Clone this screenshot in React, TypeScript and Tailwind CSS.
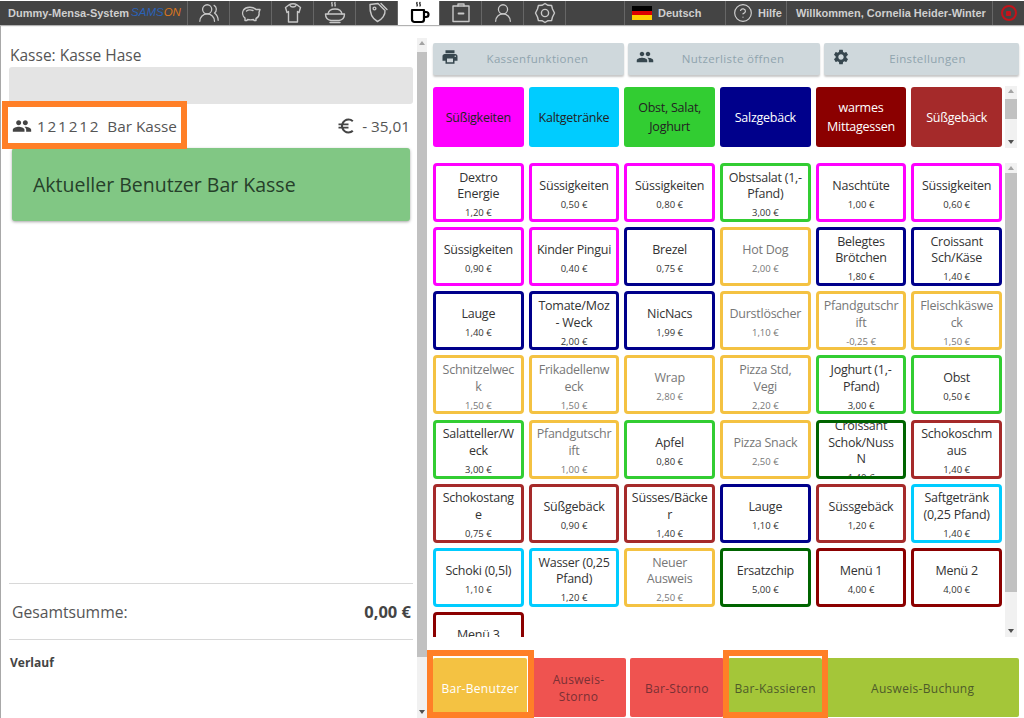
import { MdPeople, MdPrint, MdSettings, MdEuroSymbol } from "react-icons/md"
import { UserRound, UsersRound, CircleHelp } from "lucide-react"
import type { ReactNode } from "react"

const magenta = "border-[#ff00ff] text-[#333]"
const navy = "border-[#00008b] text-[#333]"
const lime = "border-[#32cd32] text-[#333]"
const amber = "border-[#f4c242] text-[#777]"
const forest = "border-[#006400] text-[#333]"
const brown = "border-[#a52a2a] text-[#333]"
const cyan = "border-[#00ccff] text-[#333]"
const maroon = "border-[#8b0000] text-[#333]"

const products: [string, string, string][] = [
  ["Dextro Energie", "1,20 €", magenta],
  ["Süssigkeiten", "0,50 €", magenta],
  ["Süssigkeiten", "0,80 €", magenta],
  ["Obstsalat (1,- Pfand)", "3,00 €", lime],
  ["Naschtüte", "1,00 €", magenta],
  ["Süssigkeiten", "0,60 €", magenta],
  ["Süssigkeiten", "0,90 €", magenta],
  ["Kinder Pingui", "0,40 €", magenta],
  ["Brezel", "0,75 €", navy],
  ["Hot Dog", "2,00 €", amber],
  ["Belegtes Brötchen", "1,80 €", navy],
  ["Croissant Sch/Käse", "1,40 €", navy],
  ["Lauge", "1,40 €", navy],
  ["Tomate/Moz - Weck", "2,00 €", navy],
  ["NicNacs", "1,99 €", navy],
  ["Durstlöscher", "1,10 €", amber],
  ["Pfandgutschrift", "-0,25 €", amber],
  ["Fleischkäsweck", "1,50 €", amber],
  ["Schnitzelweck", "1,50 €", amber],
  ["Frikadellenweck", "1,50 €", amber],
  ["Wrap", "2,80 €", amber],
  ["Pizza Std, Vegi", "2,20 €", amber],
  ["Joghurt (1,- Pfand)", "3,00 €", lime],
  ["Obst", "0,50 €", lime],
  ["Salatteller/Weck", "3,00 €", lime],
  ["Pfandgutschrift", "1,00 €", amber],
  ["Apfel", "0,80 €", lime],
  ["Pizza Snack", "2,50 €", amber],
  ["Croissant Schok/Nuss N", "1,40 €", forest],
  ["Schokoschmaus", "1,40 €", brown],
  ["Schokostange", "0,75 €", brown],
  ["Süßgebäck", "0,90 €", brown],
  ["Süsses/Bäcker", "1,40 €", brown],
  ["Lauge", "1,10 €", navy],
  ["Süssgebäck", "1,20 €", brown],
  ["Saftgetränk (0,25 Pfand)", "1,40 €", cyan],
  ["Schoki (0,5l)", "1,10 €", cyan],
  ["Wasser (0,25 Pfand)", "1,20 €", cyan],
  ["Neuer Ausweis", "2,50 €", amber],
  ["Ersatzchip", "5,00 €", forest],
  ["Menü 1", "4,00 €", maroon],
  ["Menü 2", "4,00 €", maroon],
  ["Menü 3", "4,00 €", maroon],
]

const categories: [string, string][] = [
  ["Süßigkeiten", "bg-[#ff00ff] text-[#222]"],
  ["Kaltgetränke", "bg-[#00ccff] text-[#222]"],
  ["Obst, Salat, Joghurt", "bg-[#32cd32] text-[#222]"],
  ["Salzgebäck", "bg-[#00008b] text-white"],
  ["warmes Mittagessen", "bg-[#8b0000] text-white"],
  ["Süßgebäck", "bg-[#a52a2a] text-white"],
]

function Glyph({ children, className }: { children: ReactNode; className?: string }) {
  return (
    <svg viewBox="0 0 24 24" fill="none" stroke="currentColor" strokeWidth="1.4" strokeLinecap="round" strokeLinejoin="round" className={className ?? "w-[24px] h-[24px]"}>
      {children}
    </svg>
  )
}

const PigIcon = () => (
  <Glyph>
    <path d="M4.5 9C7 5.5 14 5.5 17 8.5L21 8.5L20 11.5C20.5 14 19 16.5 17 17.5V19.5H15L14.5 18.5C12.5 19 10.5 19 8.5 18.5L8 19.5H6V17C3.5 15 3 11.5 4.5 9Z" />
    <path d="M7.5 10C9 8.8 12 8.8 14 9.5" />
  </Glyph>
)

const ShirtIcon = () => (
  <Glyph>
    <path d="M8.5 3.5C10 2.5 14 2.5 15.5 3.5L19.5 6.5L18 11.5L16.5 10.5V21H7.5V10.5L6 11.5L4.5 6.5Z" />
    <path d="M9 4.5C10 6.5 14 6.5 15 4.5" />
  </Glyph>
)

const BowlIcon = () => (
  <Glyph>
    <path d="M9 1.5C8 2.5 10 3.5 9 5M12 1.5C11 2.5 13 3.5 12 5" />
    <path d="M5 13C5.5 9.5 9 8 12 8C15 8 18.5 9.5 19 13" />
    <path d="M2.5 13H21.5C21.5 16.5 19 19 16 19.5H8C5 19 2.5 16.5 2.5 13Z" />
    <path d="M7 21.5H17" />
  </Glyph>
)

const TagIcon = () => (
  <Glyph>
    <path d="M5 3.5L13 2.5L20 9.5C20.5 14 17 18.5 12.5 20.5C7.5 18 4.5 13 5 3.5Z" />
    <circle cx="9.5" cy="7.5" r="1.4" />
    <path d="M16 2.5L22 8.5" />
  </Glyph>
)

const CoffeeIcon = () => (
  <Glyph>
    <path d="M10 1.5C9 2.5 11 3.5 10 5M13 1.5C12 2.5 14 3.5 13 5" strokeWidth="1.2" />
    <path d="M5 9H17V18.5C17 20 16 21 14.5 21H7.5C6 21 5 20 5 18.5Z" strokeWidth="2.2" />
    <path d="M17 11H19C20.5 11 21.5 12 21.5 13.5C21.5 15 20.5 16 19 16H17" strokeWidth="2.2" />
  </Glyph>
)

const BoxIcon = () => (
  <Glyph>
    <path d="M9 5V3H15V5" />
    <path d="M4 5H20V20.5H4Z" />
    <path d="M9.5 12.5H14.5" strokeWidth="1.8" />
  </Glyph>
)

const GearIcon = () => (
  <Glyph>
    <path d="M12 2.5L15 4.3L18.6 4.5L19.5 8L21.5 12L19.5 16L18.6 19.5L15 19.7L12 21.5L9 19.7L5.4 19.5L4.5 16L2.5 12L4.5 8L5.4 4.5L9 4.3Z" />
    <circle cx="12" cy="12" r="3.6" />
  </Glyph>
)

function NavCell({ children, active }: { children: ReactNode; active?: boolean }) {
  return (
    <div className={`w-[42px] h-full flex items-center justify-center border-r border-[#666] ${active ? "bg-white text-black" : "text-[#c8c8c8]"}`}>
      {children}
    </div>
  )
}

function Scrollbar({ className, thumb }: { className: string; thumb: string }) {
  return (
    <div className={`flex flex-col items-center bg-[#f1f1f1] ${className}`}>
      <div className="h-[10px] flex items-center justify-center">
        <div className="border-x-[3px] border-b-[4px] border-x-transparent border-b-[#a3a3a3]" />
      </div>
      <div className={`w-full bg-[#c1c1c1] ${thumb}`} />
      <div className="mt-auto h-[12px] flex items-center justify-center">
        <div className="border-x-[3px] border-t-[4px] border-x-transparent border-t-[#505050]" />
      </div>
    </div>
  )
}

function Annotation({ className }: { className: string }) {
  return <div className={`absolute border-[6px] border-[#ff7f27] pointer-events-none ${className}`} />
}

function ToolButton({ icon, label, className }: { icon: ReactNode; label: string; className: string }) {
  return (
    <div className={`relative h-[32px] flex items-center justify-center rounded-[2px] bg-[#cfd8dc] text-[#90a4ae] text-[11.5px] tracking-[0.35px] shadow-[0_2px_2px_rgba(0,0,0,0.22)] ${className}`}>
      <span className="absolute left-[8px] top-[5px] text-[#37474f]">{icon}</span>
      {label}
    </div>
  )
}

export default function App() {
  return (
    <div className="relative w-[1024px] h-[718px] overflow-hidden bg-white flex flex-col font-['Open_Sans',sans-serif] text-[#555]">
      <header className="h-[26px] shrink-0 pt-[1px] pb-[1px] bg-white">
        <div className="h-full bg-[#444] flex items-center font-['Liberation_Sans',sans-serif] text-[11px] font-bold text-[#cfcfcf] shadow-[0_1px_1px_rgba(0,0,0,0.3)]">
          <div className="w-[188px] h-full shrink-0 pl-[8px] flex items-center gap-[2px] border-r border-[#666]">
            <span className="whitespace-nowrap">Dummy-Mensa-System</span>
            <span className="font-normal italic text-[11.5px] whitespace-nowrap">
              <span className="text-[#2a62b8]">SAMS</span>
              <span className="text-[#d9761f]">ON</span>
            </span>
          </div>
          <NavCell><UsersRound size={22} strokeWidth={1.4} /></NavCell>
          <NavCell><PigIcon /></NavCell>
          <NavCell><ShirtIcon /></NavCell>
          <NavCell><BowlIcon /></NavCell>
          <NavCell><TagIcon /></NavCell>
          <NavCell active><CoffeeIcon /></NavCell>
          <NavCell><BoxIcon /></NavCell>
          <NavCell><UserRound size={22} strokeWidth={1.4} /></NavCell>
          <NavCell><GearIcon /></NavCell>
          <div className="w-[59px] h-full border-r border-[#666]" />
          <div className="w-[101px] h-full flex items-center pl-[7px] gap-[6px] border-r border-[#666]">
            <div className="w-[20px] h-[14px] flex flex-col">
              <div className="flex-1 bg-black" />
              <div className="flex-1 bg-[#dd0000]" />
              <div className="flex-1 bg-[#ffce00]" />
            </div>
            <span>Deutsch</span>
          </div>
          <div className="w-[61px] h-full flex items-center pl-[7px] gap-[5px] border-r border-[#666]">
            <CircleHelp size={20} strokeWidth={1.4} />
            <span>Hilfe</span>
          </div>
          <div className="w-[206px] h-full flex items-center pl-[9px] border-r border-[#666] whitespace-nowrap">Willkommen, Cornelia Heider-Winter</div>
          <div className="flex-1 flex items-center justify-center">
            <div className="w-[16px] h-[16px] rounded-full border-2 border-[#c4131a] flex items-center justify-center">
              <div className="w-[5px] h-[5px] bg-[#c4131a] rounded-[1px]" />
            </div>
          </div>
        </div>
      </header>

      <main className="flex-1 flex min-h-0">
        <section className="w-[428px] shrink-0 border-l border-[#a8a8a8] flex">
          <div className="w-[416px] flex flex-col pl-[8px]">
            <div className="mt-[18px] pl-[1px] text-[15.5px] leading-[22px] text-[#555]">Kasse: Kasse Hase</div>
            <div className="mt-[1px] w-[404px] h-[37px] rounded-[3px] bg-[#e4e4e4]" />
            <div className="mt-[4px] mb-[1px] h-[36px] w-[404px] flex items-center text-[15.3px] pl-[3px] pr-[3px]">
              <MdPeople className="w-[20px] h-[20px] text-[#444]" />
              <span className="ml-[5px] tracking-[1.8px]">121212</span>
              <span className="ml-[7px]">Bar Kasse</span>
              <MdEuroSymbol className="ml-auto w-[20px] h-[20px] text-[#444]" />
              <span className="ml-[6px]">- 35,01</span>
            </div>
            <div className="mt-[3px] ml-[3px] w-[398px] h-[73px] rounded-[3px] bg-[#81c784] flex items-center pl-[21px] text-[19.5px] text-[#26402a] shadow-[0_1px_3px_rgba(0,0,0,0.35)]">
              Aktueller Benutzer Bar Kasse
            </div>
            <div className="mt-auto w-[404px] border-t border-[#d8d8d8]" />
            <div className="w-[404px] h-[55px] flex items-center justify-between pt-[2px] pl-[3px] pr-[2px] text-[15.7px]">
              <span>Gesamtsumme:</span>
              <span className="font-bold text-[16.5px] text-[#444]">0,00 €</span>
            </div>
            <div className="w-[404px] border-t border-[#d8d8d8]" />
            <div className="mt-[14px] pl-[1px] h-[64px] text-[12px] leading-[18px] font-bold text-[#444]">Verlauf</div>
          </div>
          <Scrollbar className="w-[10px] mt-[12px]" thumb="h-[605px] mt-[4px]" />
        </section>

        <section className="flex-1 flex flex-col pl-[5px] pr-[5px] min-w-0">
          <div className="mt-[17px] flex gap-[4px]">
            <ToolButton className="w-[191px] pl-[18px]" label="Kassenfunktionen" icon={<MdPrint className="w-[18px] h-[18px]" />} />
            <ToolButton className="w-[192px] pl-[18px]" label="Nutzerliste öffnen" icon={<MdPeople className="w-[18px] h-[18px]" />} />
            <ToolButton className="w-[195px] pl-[12px]" label="Einstellungen" icon={<MdSettings className="w-[18px] h-[18px]" />} />
          </div>

          <div className="mt-[12px] flex">
            <div className="w-[569px] grid grid-cols-6 gap-x-[5px]">
              {categories.map(([name, color]) => (
                <div key={name} className={`h-[60px] rounded-[3px] flex items-center justify-center text-center text-[12.5px] tracking-[-0.25px] leading-[19px] px-[4px] ${color}`}>
                  {name}
                </div>
              ))}
            </div>
            <Scrollbar className="ml-[3px] w-[12px] h-[62px] -mt-[1px]" thumb="h-[20px] mt-[3px]" />
          </div>

          <div className="mt-[15px] flex">
            <div className="w-[569px] h-[474px] overflow-hidden grid grid-cols-6 gap-x-[5px] gap-y-[5.15px] auto-rows-[59px]">
              {products.map(([name, price, color], i) => (
                <div key={i} className={`h-[59px] rounded-[4px] border-[3px] bg-white overflow-hidden flex flex-col items-center justify-center text-center px-[4.5px] pt-[5px] ${color}`}>
                  <div className="shrink-0 w-full text-[12.5px] tracking-[-0.25px] leading-[16.5px] [overflow-wrap:anywhere]">{name}</div>
                  <div className="shrink-0 mt-[3.5px] text-[9.5px] leading-[14px]">{price}</div>
                </div>
              ))}
            </div>
            <Scrollbar className="ml-[3px] w-[12px] h-[474px]" thumb="h-[419px]" />
          </div>

          <div className="mt-[21px] h-[59px] grid grid-cols-6 gap-x-[4px] text-[12px] leading-[17px] text-center tracking-[0.3px]">
            <div className="rounded-[2px] pt-[1px] bg-[#f4c242] text-white flex items-center justify-center">Bar-Benutzer</div>
            <div className="rounded-[2px] pt-[1px] px-[14px] bg-[#ef5350] text-[#7a3035] flex items-center justify-center">Ausweis-Storno</div>
            <div className="rounded-[2px] pt-[1px] bg-[#ef5350] text-[#7a3035] flex items-center justify-center">Bar-Storno</div>
            <div className="rounded-[2px] pt-[1px] bg-[#a4c639] text-[#4e5b2a] flex items-center justify-center">Bar-Kassieren</div>
            <div className="col-span-2 rounded-[2px] pt-[1px] bg-[#a4c639] text-[#4e5b2a] flex items-center justify-center">Ausweis-Buchung</div>
          </div>
        </section>
      </main>

      <Annotation className="left-[2px] top-[101px] w-[185px] h-[48px]" />
      <Annotation className="left-[427px] top-[650px] w-[107px] h-[68px]" />
      <Annotation className="left-[723px] top-[650px] w-[105px] h-[68px]" />
    </div>
  )
}
